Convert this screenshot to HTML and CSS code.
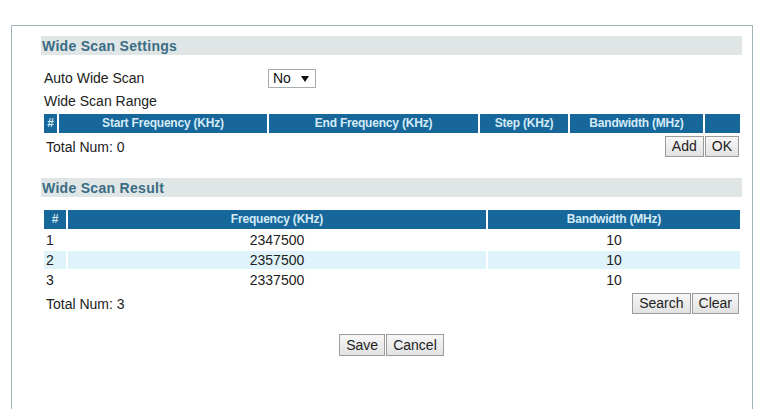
FILE: index.html
```html
<!DOCTYPE html>
<html>
<head>
<meta charset="utf-8">
<link rel="stylesheet" href="styles.css">
</head>
<body>
<div class="page">
  <div class="panel">
    <div class="section-title">Wide Scan Settings</div>
    <div class="form">
      <div class="field-row">
        <div class="label">Auto Wide Scan</div>
        <div class="fake-select">
          <span>No</span>
          <svg class="arrow" width="8" height="6" viewBox="0 0 8 6"><polygon points="0,0 8,0 4,6" fill="#111"/></svg>
        </div>
      </div>
      <div class="range-label">Wide Scan Range</div>
    </div>
    <table class="grid grid-range">
      <colgroup>
        <col class="c-idx1"><col class="c-start"><col class="c-end"><col class="c-step"><col class="c-bw1"><col class="c-act">
      </colgroup>
      <thead>
        <tr><th>#</th><th>Start Frequency (KHz)</th><th>End Frequency (KHz)</th><th>Step (KHz)</th><th>Bandwidth (MHz)</th><th></th></tr>
      </thead>
    </table>
    <div class="total-row">
      <span class="total">Total Num: 0</span>
      <div class="btns"><button class="btn">Add</button><button class="btn">OK</button></div>
    </div>

    <div class="section-title second">Wide Scan Result</div>
    <table class="grid grid-result">
      <colgroup>
        <col class="c-idx2"><col class="c-freq"><col class="c-bw2">
      </colgroup>
      <thead>
        <tr><th>#</th><th>Frequency (KHz)</th><th>Bandwidth (MHz)</th></tr>
      </thead>
      <tbody>
        <tr><td class="idx">1</td><td>2347500</td><td>10</td></tr>
        <tr class="alt"><td class="idx">2</td><td>2357500</td><td>10</td></tr>
        <tr><td class="idx">3</td><td>2337500</td><td>10</td></tr>
      </tbody>
    </table>
    <div class="total-row result-total">
      <span class="total">Total Num: 3</span>
      <div class="btns"><button class="btn">Search</button><button class="btn">Clear</button></div>
    </div>

    <div class="footer-btns"><button class="btn">Save</button><button class="btn">Cancel</button></div>
  </div>
</div>
</body>
</html>
```

FILE: styles.css
```css
* { box-sizing: border-box; }
html, body { margin: 0; padding: 0; background: #ffffff; }
body {
  font-family: "Liberation Sans", Arial, sans-serif;
  font-size: 14px;
  color: #222222;
}
.page {
  padding: 25px 0 0 11px;
}
.panel {
  width: 742px;
  height: 400px;
  border: 1px solid #a3b1b8;
  border-bottom: none;
  padding: 10px 10px 0 29px;
}
.section-title {
  height: 19px;
  line-height: 20px;
  background: #dfe6e5;
  color: #3a6c85;
  font-weight: bold;
  font-size: 14px;
  letter-spacing: 0.3px;
  padding-left: 1px;
}
.section-title.second { margin-top: 21px; }
.form { padding-left: 3px; }
.field-row {
  display: flex;
  align-items: center;
  margin-top: 14px;
  height: 19px;
}
.label { width: 224px; line-height: 19px; }
.fake-select {
  width: 48px;
  height: 19px;
  border: 1px solid #a5acb2;
  display: flex;
  align-items: center;
  justify-content: space-between;
  padding: 0 6px 0 4px;
  line-height: 17px;
  color: #111;
}
.arrow { display: block; }
.range-label {
  height: 24px;
  line-height: 26px;
}
.grid {
  width: 700px;
  margin-left: 1px;
  border-collapse: separate;
  border-spacing: 2px;
  table-layout: fixed;
}
.grid th {
  background: #17679a;
  color: #d4ebf7;
  font-weight: bold;
  font-size: 12px;
  letter-spacing: -0.2px;
  height: 19px;
  padding: 0;
  text-align: center;
  line-height: 19px;
}
.grid td {
  height: 18px;
  padding: 0;
  text-align: center;
  line-height: 18px;
  color: #222;
}
.grid td.idx { text-align: left; padding-left: 2px; }
.grid tr.alt td { background: #dff3fa; }
.grid-result { margin-top: 11px; }
.c-idx1 { width: 13px; }
.c-start { width: 208px; }
.c-end { width: 209px; }
.c-step { width: 88px; }
.c-bw1 { width: 133px; }
.c-act { width: 35px; }
.c-idx2 { width: 22px; }
.c-freq { width: 418px; }
.c-bw2 { width: 252px; }
.total-row {
  display: flex;
  justify-content: space-between;
  align-items: center;
  margin-top: 1px;
  padding: 0 3px 0 5px;
  height: 21px;
}
.total-row.result-total { margin-top: 2px; }
.btns { display: flex; gap: 1px; }
.btn {
  font-family: "Liberation Sans", Arial, sans-serif;
  font-size: 14px;
  color: #222;
  height: 21px;
  padding: 0 6px;
  margin: 0;
  border: 1px solid #9c9c9c;
  border-radius: 0;
  background: linear-gradient(#f7f7f7, #e2e2e2);
  line-height: 19px;
}
.footer-btns {
  display: flex;
  justify-content: center;
  gap: 1px;
  margin-top: 20px;
}
.footer-btns .btn { height: 22px; }
```
